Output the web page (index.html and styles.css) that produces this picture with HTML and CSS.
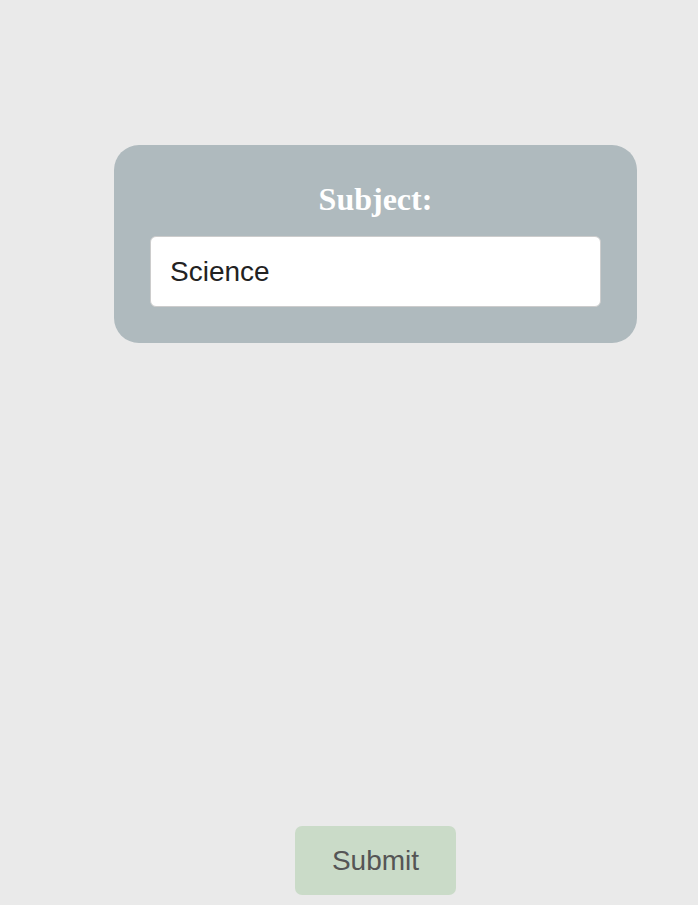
FILE: index.html
```html
<!DOCTYPE html>
<html>
<head>
<meta charset="utf-8">
<link rel="stylesheet" href="styles.css">
</head>
<body>
<main class="page">
  <section class="card">
    <h1 class="card-title">Subject:</h1>
    <input class="subject-input" type="text" value="Science">
  </section>
  <div class="actions">
    <button class="submit-btn" type="button">Submit</button>
  </div>
</main>
</body>
</html>
```
FILE: styles.css
```css
html, body {
  margin: 0;
  padding: 0;
  background: #eaeaea;
}
body {
  height: 905px;
  overflow: hidden;
}
.page {
  width: 523px;
  margin-left: 114px;
  padding-top: 145px;
  display: flex;
  flex-direction: column;
  align-items: center;
}
.card {
  box-sizing: border-box;
  width: 523px;
  height: 198px;
  background: #afbabe;
  border-radius: 25px;
  padding: 0 36px 36px;
  display: flex;
  flex-direction: column;
  align-items: stretch;
}
.card-title {
  margin: 34px 0 0;
  height: 57px;
  font-family: "Liberation Serif", "Times New Roman", serif;
  font-weight: bold;
  font-size: 32px;
  line-height: 40px;
  color: #ffffff;
  text-align: center;
}
.subject-input {
  box-sizing: border-box;
  width: 451px;
  height: 71px;
  margin: 0;
  padding: 0 19px;
  border: 1px solid #cccccc;
  border-radius: 6px;
  background: #ffffff;
  font-family: "Liberation Sans", Arial, sans-serif;
  font-size: 28px;
  color: #222222;
  outline: none;
}
.actions {
  margin-top: 483px;
  display: flex;
  justify-content: center;
}
.submit-btn {
  box-sizing: border-box;
  width: 161px;
  height: 69px;
  border: none;
  border-radius: 7px;
  background: #cadbc8;
  font-family: "Liberation Sans", Arial, sans-serif;
  font-size: 28px;
  color: #555555;
  padding: 0;
}
```
